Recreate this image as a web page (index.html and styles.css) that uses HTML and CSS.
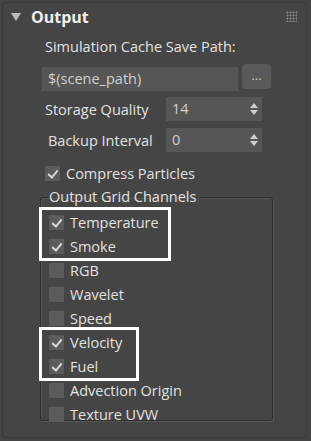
FILE: index.html
```html
<!DOCTYPE html>
<html lang="en">
<head>
    <meta charset="UTF-8">
    <title>Output</title>
    <link rel="stylesheet" href="styles.css">
</head>
<body>

    <div class="panel">
        <!-- rollout header -->
        <div class="header">
            <span class="arrow"></span>
            <span class="title">Output</span>
            <span class="grip"></span>
        </div>

        <div class="content">
            <div class="caption">Simulation Cache Save Path:</div>

            <div class="path-row">
                <div class="field path">$(scene_path)</div>
                <div class="browse">...</div>
            </div>

            <div class="row">
                <span class="label">Storage Quality</span>
                <div class="field spinner">14<span class="arrows"></span></div>
            </div>
            <div class="row">
                <span class="label label-b">Backup Interval</span>
                <div class="field spinner">0<span class="arrows"></span></div>
            </div>

            <label class="check compress"><span class="box on"></span>Compress Particles</label>

            <fieldset class="group">
                <legend>Output Grid Channels</legend>

                <div class="mark mark-a">
                    <label class="check"><span class="box on"></span>Temperature</label>
                    <label class="check"><span class="box on"></span>Smoke</label>
                </div>
                <label class="check"><span class="box"></span>RGB</label>
                <label class="check"><span class="box"></span>Wavelet</label>
                <label class="check"><span class="box"></span>Speed</label>
                <div class="mark mark-b">
                    <label class="check"><span class="box on"></span>Velocity</label>
                    <label class="check"><span class="box on"></span>Fuel</label>
                </div>
                <label class="check"><span class="box"></span>Advection Origin</label>
                <label class="check"><span class="box"></span>Texture UVW</label>
            </fieldset>
        </div>
    </div>

</body>
</html>
```
FILE: styles.css
```css
* {
    margin: 0;
    padding: 0;
    box-sizing: border-box;
}
html, body {
    width: 100%;
    height: 100%;
    background: #444444;
    font-family: 'Open Sans', sans-serif;
    font-size: 14.5px;
    color: #e2e2e2;
    overflow: hidden;
}
.panel {
    margin: 2px 4px 2px 2px;
    height: 436px;
    border: 1px solid #3a3a3a;
    border-radius: 4px;
    background: #454545;
}
/* header */
.header {
    height: 28px;
    display: flex;
    align-items: center;
    padding-left: 8px;
    position: relative;
}
.arrow {
    width: 0;
    height: 0;
    border-left: 5px solid transparent;
    border-right: 5px solid transparent;
    border-top: 8px solid #bdbdbd;
    margin-right: 10px;
}
.title {
    font-weight: bold;
    font-size: 16px;
    color: #f0f0f0;
}
.grip {
    position: absolute;
    right: 9px;
    top: 8px;
    width: 11px;
    height: 11px;
    background-image: radial-gradient(circle, #8a8a8a 0.8px, transparent 1.2px);
    background-size: 3px 3px;
}
.content {
    padding-left: 39px;
}
.caption {
    padding-left: 3px;
    height: 33px;
    line-height: 32px;
}
.path-row {
    display: flex;
    align-items: flex-start;
    gap: 4px;
}
.field {
    background: #565656;
    color: #cfcfcf;
    height: 24px;
    line-height: 23px;
    padding-left: 6px;
}
.path {
    width: 196px;
    margin-top: 3px;
}
.browse {
    width: 29px;
    height: 25px;
    border-radius: 4px;
    background: #595959;
    color: #c8c8c8;
    text-align: center;
    line-height: 22px;
    font-size: 13px;
}
.row {
    display: flex;
    align-items: center;
    margin-top: 6px;
    height: 24px;
}
.row + .row {
    margin-top: 7px;
}
.label {
    width: 124px;
    padding-left: 3px;
}
.label-b {
    padding-left: 6px;
}
.spinner {
    width: 96px;
    position: relative;
}
.arrows {
    position: absolute;
    right: 4px;
    top: 6px;
    width: 8px;
    height: 12px;
}
.arrows::before,
.arrows::after {
    content: "";
    position: absolute;
    left: 0;
    border-left: 4px solid transparent;
    border-right: 4px solid transparent;
}
.arrows::before {
    top: 0;
    border-bottom: 5px solid #cfcfcf;
}
.arrows::after {
    bottom: 0;
    border-top: 5px solid #cfcfcf;
}
/* checkboxes */
.check {
    display: flex;
    align-items: center;
    height: 24px;
    white-space: nowrap;
}
.box {
    width: 15px;
    height: 15px;
    background: #5b5b5b;
    margin-right: 6px;
    flex: none;
    position: relative;
}
.box.on::after {
    content: "";
    position: absolute;
    left: 5px;
    top: 2px;
    width: 4px;
    height: 8px;
    border-right: 2px solid #d6d6d6;
    border-bottom: 2px solid #d6d6d6;
    transform: rotate(40deg);
}
.compress {
    margin-top: 9px;
    padding-left: 3px;
}
/* group box */
.group {
    margin-top: 3px;
    margin-left: -2px;
    width: 233px;
    height: 233px;
    border: 1px solid #2f2f2f;
    border-radius: 3px;
    box-shadow: inset 1px 1px 0 #555, 1px 1px 0 #555;
    padding: 0 0 0 1px;
}
.group legend {
    margin-left: 6px;
    padding: 0 1px;
    line-height: 18px;
}
.group > .check,
.mark .check {
    padding-left: 7px;
}
.mark {
    outline: 3px solid #ffffff;
}
.mark-a {
    width: 126px;
    margin-top: 4px;
}
.mark-b {
    width: 94px;
}
```
